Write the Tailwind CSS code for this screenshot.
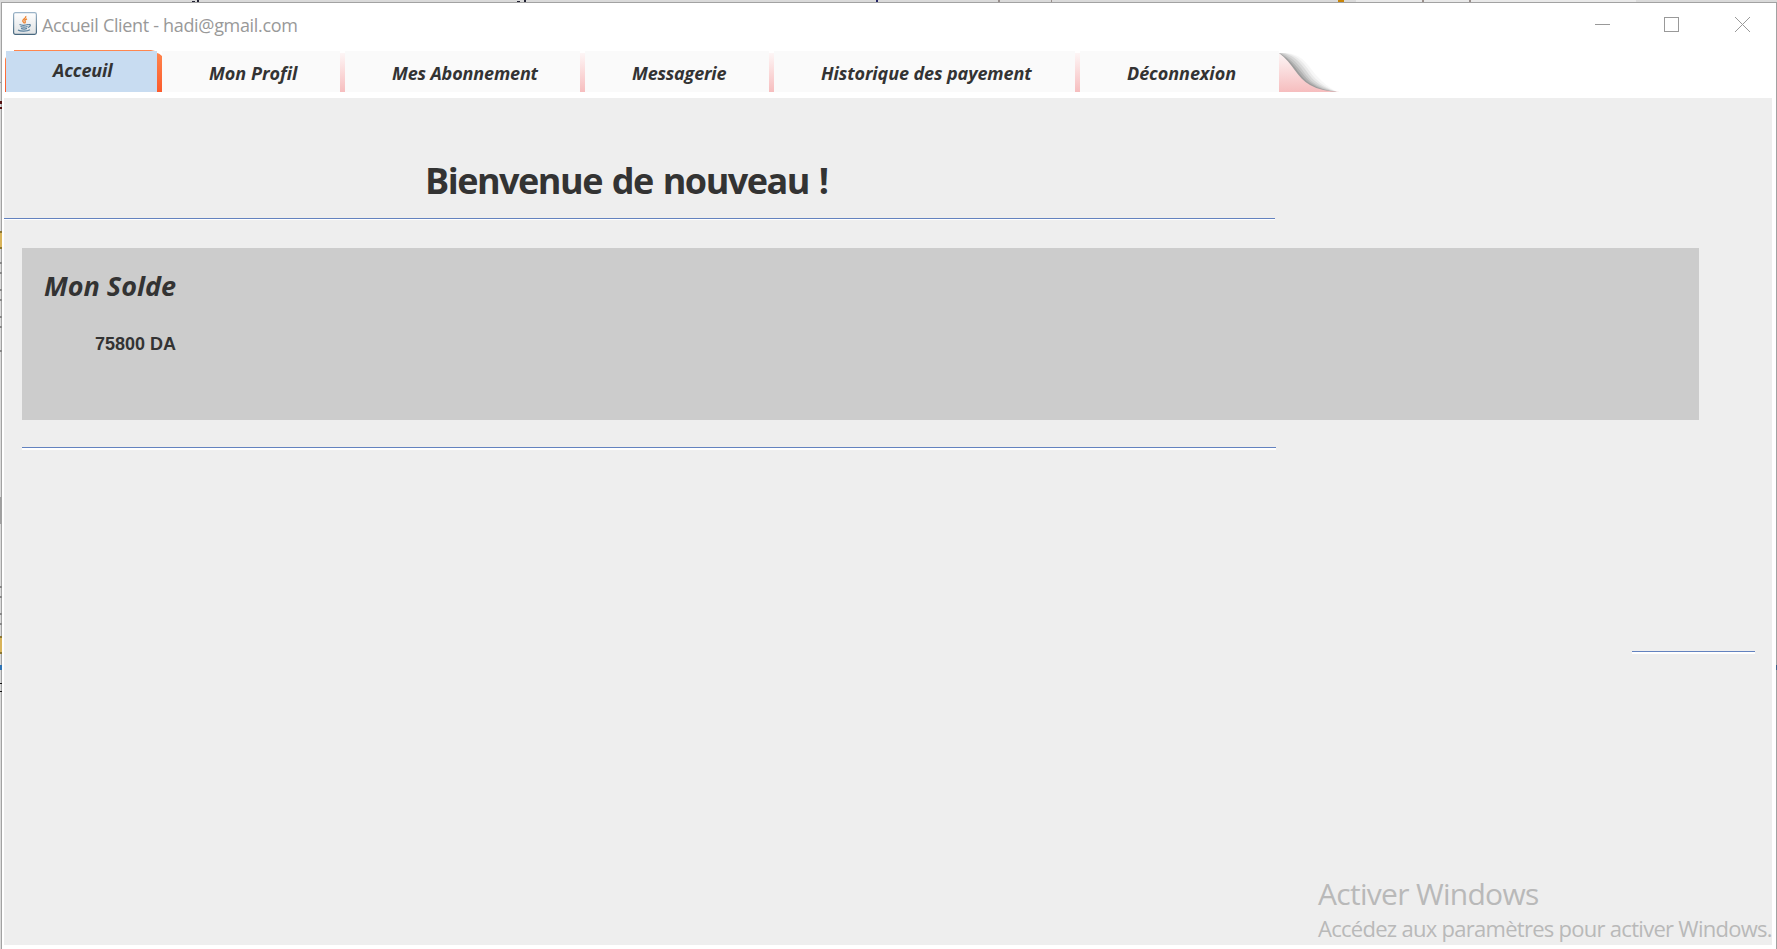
<!DOCTYPE html>
<html lang="fr">
<head>
<meta charset="utf-8">
<title>Accueil Client</title>
<script src="https://cdn.jsdelivr.net/npm/@tailwindcss/browser@4"></script>
</head>
<body class="relative h-[949px] w-[1777px] overflow-hidden bg-[#dadada] font-['Open_Sans',sans-serif] text-[#333]">
<!-- Slivers of the window behind, then the application window -->
<svg class="absolute inset-0" width="1777" height="949" shape-rendering="crispEdges">
  <rect x="1356" width="280" height="2" fill="#e9e9e9"/>
  <g fill="#223"><rect x="192" y="1" width="3" height="1"/><rect x="197" width="2" height="2"/><rect x="517" y="1" width="3" height="1"/><rect x="524" width="2" height="2"/></g>
  <rect x="876" width="2" height="3" fill="#226"/>
  <g fill="#998f8c"><rect x="998" width="2" height="2"/><rect x="1051" width="1" height="3"/><rect x="1422" width="2" height="2"/><rect x="1469" width="2" height="2"/></g>
  <rect x="1338" width="6" height="2" fill="#c98508"/>
</svg>
<div class="relative mt-[2px] ml-px h-[947px] w-[1776px] border-t border-r border-l border-[#a2a2a2] bg-white">
  <header class="flex h-[47px] items-start">
    <svg class="mt-[9px] ml-[11px]" width="24" height="23" viewBox="0 0 24 23" fill="none">
      <defs><linearGradient id="cupbg" x1="0" y1="0" x2="0" y2="1"><stop stop-color="#fff"/><stop offset="1" stop-color="#dfe2e4"/></linearGradient><linearGradient id="cupb" x1="0" y1="0" x2="0" y2="1"><stop stop-color="#9cb4c8"/><stop offset="1" stop-color="#48687f"/></linearGradient></defs>
      <rect x=".6" y=".6" width="22.8" height="21.8" rx="1.8" fill="url(#cupbg)" stroke="url(#cupb)" stroke-width="1.2"/>
      <path d="M12.800 4c1 2.500-4 3.200-3 5.200.3.900 1.500 1.300 1.200 2.300M14 6.800c-2 1-2.800 1.500-1.800 2.700.5.700 0 1.200-.5 1.700" stroke="#ef8431" stroke-width="1.300"/>
      <path d="M6.500 12.500c2 .9 6 .8 8.700 0M7.500 14.500c2 .8 5 .8 7 0M8 16.400c2 .8 4.200.8 6 0M15.200 12.700c3-1 2.700 2-.3 2.800M5 18c2.500 1.500 9 1.500 12-.3" stroke="#58809f" stroke-width="1.200"/>
    </svg>
    <h1 class="ml-[5px] h-[45px] text-[18px] leading-[45px] tracking-[-0.33px] whitespace-nowrap text-[#999]">Accueil Client - hadi@gmail.com</h1>
    <svg class="mt-[13px] mr-[24px] ml-auto" width="157" height="18" viewBox="0 0 157 18" fill="none" stroke="#999" stroke-width="1">
      <path d="M0 8.500H15"/><rect x="69.500" y="1.500" width="14" height="14"/><path d="M140 1L155 16M155 1L140 16"/>
    </svg>
  </header>
  <nav class="flex h-[42px] items-end text-[18px] leading-[20px] font-bold whitespace-nowrap italic">
    <div class="relative ml-[4px] h-[41px] w-[151px] bg-[#c8dcf1] pt-[9px] pl-[47px] tracking-[-0.1px]">Acceuil
      <svg class="absolute -top-px -left-px" width="158" height="42"><defs><linearGradient id="or" x1="0" y1="0" x2="0" y2="1"><stop stop-color="#ff874f"/><stop offset="1" stop-color="#fb5b2c"/></linearGradient></defs><path d="M9 0H146L150 1H9zM0 9L1 7V42H0zM152 3Q154 3 157 6V42H152z" fill="url(#or)"/></svg>
    </div>
    <div class="h-[39px] w-[5px]"></div>
    <div class="h-[41px] w-[178px] bg-[#fafafa] pt-[12px] pl-[47px]">Mon Profil</div>
    <div class="h-[39px] w-[5px] bg-linear-to-b from-[#fdf6f6] to-[#f6bdbe]"></div>
    <div class="h-[41px] w-[235px] bg-[#fafafa] pt-[12px] pl-[47px] tracking-[-0.15px]">Mes Abonnement</div>
    <div class="h-[39px] w-[5px] bg-linear-to-b from-[#fdf6f6] to-[#f6bdbe]"></div>
    <div class="h-[41px] w-[184px] bg-[#fafafa] pt-[12px] pl-[47px] tracking-[-0.2px]">Messagerie</div>
    <div class="h-[39px] w-[5px] bg-linear-to-b from-[#fdf6f6] to-[#f6bdbe]"></div>
    <div class="h-[41px] w-[301px] bg-[#fafafa] pt-[12px] pl-[47px] tracking-[-0.1px]">Historique des payement</div>
    <div class="h-[39px] w-[5px] bg-linear-to-b from-[#fdf6f6] to-[#f6bdbe]"></div>
    <div class="h-[41px] w-[199px] bg-[#fafafa] pt-[12px] pl-[47px] tracking-[-0.05px]">Déconnexion</div>
    <svg width="62" height="39" viewBox="0 0 62 39">
      <defs><linearGradient id="pk" x1="0" y1="0" x2="0" y2="1"><stop stop-color="#fdf6f6"/><stop offset="1" stop-color="#f6bdbe"/></linearGradient></defs>
      <g fill="#000" fill-opacity=".075">
        <path d="M0 0H8C26 2 30 15 39 24Q46 32 58 39H0z" fill-opacity=".03"/>
        <path d="M0 0H6C24 3 28 17 37 26Q45 34 58 39H0z" fill-opacity=".05"/>
        <path d="M0 0H4C22 4 26 19 36 28Q44 35 58 39H0z"/>
        <path d="M0 0H2C20 6 24 21 34 29Q43 36 58 39H0z"/>
        <path d="M0 0C18 8 22 22 33 30Q42 37 58 39H0z" fill-opacity=".1"/>
        <path d="M0 0C16 9 20 24 32 31Q41 37 58 39H0z" fill-opacity=".12"/>
      </g>
      <path d="M0 0C14 10 18 25 31 32Q41 38 61 39H0z" fill="url(#pk)"/>
    </svg>
  </nav>
  <main class="mt-[6px] ml-[2px] h-[847px] w-[1768px] bg-[#eee]">
    <h2 class="ml-[421px] pt-[63px] text-[36px] leading-[40px] font-bold tracking-[-1.5px] [word-spacing:2px]">Bienvenue de nouveau !</h2>
    <div class="mt-[17px] h-[2px] w-[1271px] border-t border-[#6382bf] bg-white"></div>
    <section class="mt-[28px] ml-[18px] h-[172px] w-[1677px] bg-[#ccc] pt-[23px] pl-[22px]">
      <h3 class="text-[27px] leading-[30px] font-bold italic">Mon Solde</h3>
      <p class="mt-[33px] ml-[51px] font-['Liberation_Sans',sans-serif] text-[18px] leading-[20px] font-bold">75800 DA</p>
    </section>
    <div class="mt-[27px] ml-[18px] h-[3px] w-[1254px] border-t border-[#6382bf] bg-white"></div>
    <div class="mt-[201px] ml-[1628px] h-[3px] w-[123px] border-t border-[#6382bf] bg-white"></div>
  </main>
</div>
<!-- Left and right edge remnants -->
<svg class="absolute inset-0" width="1777" height="949" shape-rendering="crispEdges">
  <rect y="101" width="2" height="3" fill="#511"/><rect y="107" width="2" height="2" fill="#511"/>
  <rect y="82" width="1" height="1" fill="#999"/>
  <rect y="231" width="2" height="18" fill="#d9b45a"/><rect y="231" width="2" height="2" fill="#8c7732"/><rect y="247" width="2" height="2" fill="#8c7732"/>
  <rect y="636" width="2" height="18" fill="#d9b45a"/><rect y="636" width="2" height="2" fill="#8c7732"/><rect y="652" width="2" height="2" fill="#8c7732"/>
  <g fill="#888"><rect y="262" width="2" height="2"/><rect y="272" width="2" height="2"/><rect y="289" width="2" height="2"/><rect y="299" width="2" height="2"/><rect y="316" width="2" height="2"/><rect y="326" width="2" height="2"/><rect y="350" width="2" height="2"/><rect y="586" width="2" height="2"/><rect y="596" width="2" height="2"/><rect y="613" width="2" height="2"/><rect y="623" width="2" height="2"/></g>
  <rect y="497" width="2" height="27" fill="#a0a0a0"/>
  <rect y="665" width="2" height="5" fill="#2f74b5"/><rect y="683" width="2" height="1" fill="#111"/><rect y="691" width="2" height="1" fill="#111"/>
  <rect x="1776" y="665" width="1" height="5" fill="#3a6288"/>
</svg>
<!-- System watermark lies over the window -->
<aside class="absolute top-[874px] left-[1318px] whitespace-nowrap text-[#b9b9b9]">
  <p class="text-[30px] leading-[40px] tracking-[-0.7px]">Activer Windows</p>
  <p class="-mt-px text-[22px] leading-[30px] tracking-[-0.72px]">Accédez aux paramètres pour activer Windows.</p>
</aside>
</body>
</html>
